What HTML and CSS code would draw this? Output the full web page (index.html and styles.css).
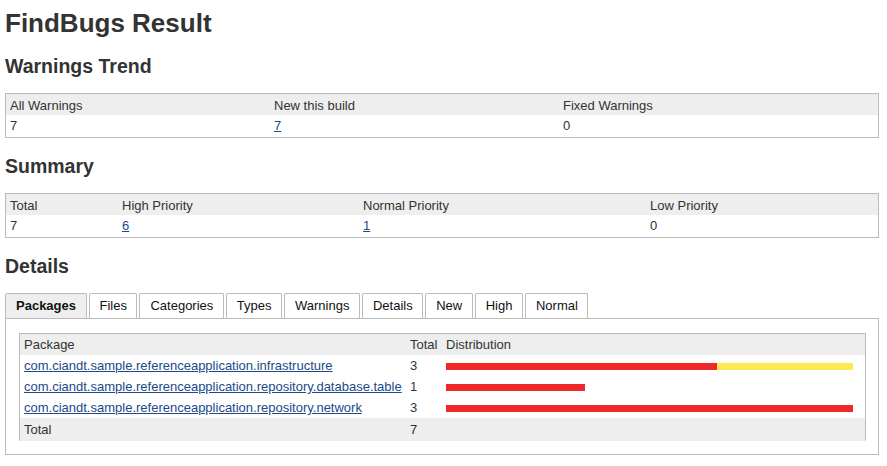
FILE: index.html
```
<!DOCTYPE html>
<html>
<head>
<meta charset="utf-8">
<link rel="stylesheet" href="styles.css">
</head>
<body>
<h1 class="title">FindBugs Result</h1>

<h2 class="section">Warnings Trend</h2>
<table class="grid">
  <tr>
    <th class="w1">All Warnings</th>
    <th class="w2">New this build</th>
    <th class="w3">Fixed Warnings</th>
  </tr>
  <tr>
    <td>7</td>
    <td><a href="#">7</a></td>
    <td>0</td>
  </tr>
</table>

<h2 class="section">Summary</h2>
<table class="grid">
  <tr>
    <th class="s1">Total</th>
    <th class="s2">High Priority</th>
    <th class="s3">Normal Priority</th>
    <th class="s4">Low Priority</th>
  </tr>
  <tr>
    <td>7</td>
    <td><a href="#">6</a></td>
    <td><a href="#">1</a></td>
    <td>0</td>
  </tr>
</table>

<h2 class="section">Details</h2>
<div class="tabs">
  <div class="tab active">Packages</div>
  <div class="tab">Files</div>
  <div class="tab">Categories</div>
  <div class="tab">Types</div>
  <div class="tab">Warnings</div>
  <div class="tab">Details</div>
  <div class="tab">New</div>
  <div class="tab">High</div>
  <div class="tab">Normal</div>
</div>
<div class="panel">
  <table class="pkg">
    <tr>
      <th class="p1">Package</th>
      <th class="p2">Total</th>
      <th class="p3">Distribution</th>
    </tr>
    <tr>
      <td><a href="#">com.ciandt.sample.referenceapplication.infrastructure</a></td>
      <td>3</td>
      <td class="dist"><div class="bar"><span class="high" style="width:271px"></span><span class="normal" style="width:136px"></span></div></td>
    </tr>
    <tr>
      <td><a href="#">com.ciandt.sample.referenceapplication.repository.database.table</a></td>
      <td>1</td>
      <td class="dist"><div class="bar"><span class="high" style="width:139px"></span></div></td>
    </tr>
    <tr>
      <td><a href="#">com.ciandt.sample.referenceapplication.repository.network</a></td>
      <td>3</td>
      <td class="dist"><div class="bar"><span class="high" style="width:407px"></span></div></td>
    </tr>
    <tr class="total">
      <td>Total</td>
      <td>7</td>
      <td></td>
    </tr>
  </table>
</div>
</body>
</html>
```

FILE: styles.css
```
html, body {
  margin: 0;
  background: #fff;
}
body {
  padding: 0 8px 0 5px;
  font-family: "Liberation Sans", Arial, Helvetica, sans-serif;
  font-size: 13px;
  color: #333;
}
a {
  color: #204a87;
  text-decoration: underline;
}
.title {
  font-size: 26px;
  line-height: 32px;
  font-weight: bold;
  margin: 7px 0 0;
  color: #333;
}
.section {
  font-size: 19.5px;
  line-height: 24px;
  font-weight: bold;
  margin: 16px 0 15px;
  color: #333;
}
.title + .section {
  margin-top: 15px;
}
.grid {
  width: 874px;
  table-layout: fixed;
  border-collapse: separate;
  border-spacing: 0;
  border: 1px solid #bbb;
}
.grid th, .grid td {
  box-sizing: border-box;
  text-align: left;
  font-weight: normal;
  padding: 4px 4px 2px;
  line-height: 15px;
  white-space: nowrap;
}
.grid th {
  background: #eee;
}
.grid td {
  padding: 3px 4px 4px;
  background: #fff;
}
.w1 { width: 264px; }
.w2 { width: 289px; }
.w3 { width: 319px; }
.s1 { width: 112px; }
.s2 { width: 241px; }
.s3 { width: 287px; }
.s4 { width: 232px; }

.tabs {
  display: flex;
  gap: 2px;
  height: 25px;
}
.tab {
  box-sizing: border-box;
  height: 25px;
  padding: 0 9.5px 0 10px;
  border: 1px solid #bbb;
  border-bottom: none;
  border-radius: 2px 2px 0 0;
  line-height: 24px;
  color: #111;
  background: #fff;
}
.tab.active {
  background: #eee;
  font-weight: bold;
}
.panel {
  width: 874px;
  box-sizing: border-box;
  border: 1px solid #bbb;
  padding: 14px 12px 13px 13px;
}
.pkg {
  width: 847px;
  table-layout: fixed;
  border-collapse: separate;
  border-spacing: 0;
  border: 1px solid #bbb;
  border-bottom-color: #eee;
}
.pkg th, .pkg td {
  box-sizing: border-box;
  text-align: left;
  font-weight: normal;
  padding: 3px 4px;
  line-height: 15px;
  white-space: nowrap;
  vertical-align: top;
}
.pkg th {
  background: #eee;
}
.pkg tr.total td {
  background: #eee;
  padding: 4px 4px 3px;
}
.p1 { width: 386px; }
.p2 { width: 36px; }
.p3 { width: 423px; }
.bar {
  display: flex;
  height: 7px;
  margin-top: 5px;
}
.bar span {
  display: block;
  height: 7px;
}
.bar .high { background: #ef2929; }
.bar .normal { background: #fce94f; }
```
